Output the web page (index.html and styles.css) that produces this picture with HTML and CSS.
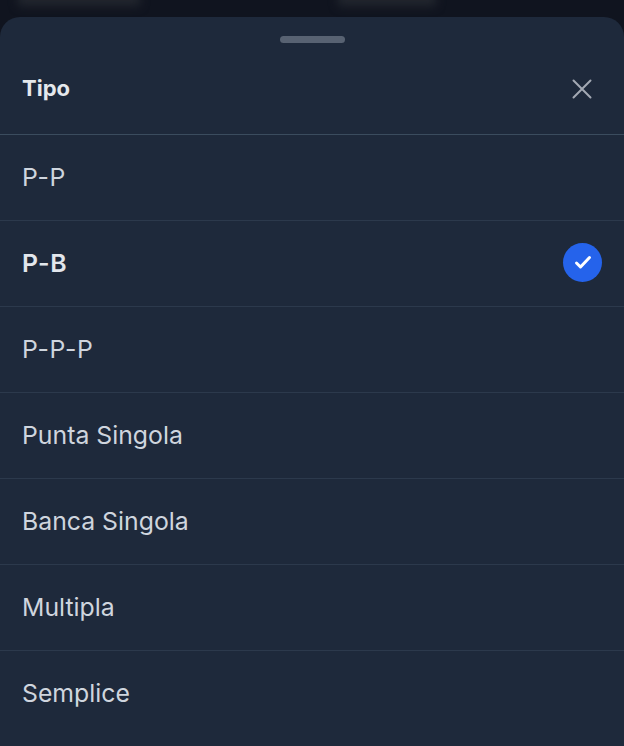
FILE: index.html
```html
<!DOCTYPE html>
<html>
<head>
    <title>Tipo</title>
    <link rel="stylesheet" href="styles.css">
</head>
<body>
    <div class="backdrop">
        <span class="blur blur-left"></span>
        <span class="blur blur-right"></span>
    </div>

    <div class="sheet">
        <div class="handle"></div>

        <div class="sheet-header">
            <span class="sheet-title">Tipo</span>
            <svg class="close" width="24" height="24" viewBox="0 0 24 24" fill="none" stroke="#a3a9b4" stroke-width="2" stroke-linecap="round">
                <path d="M3.5 3.5 L20.5 20.5 M20.5 3.5 L3.5 20.5"/>
            </svg>
        </div>

        <ul class="options">
            <li class="code">P-P</li>
            <li class="code selected">
                P-B
                <span class="check">
                    <svg width="18" height="18" viewBox="0 0 18 18" fill="none" stroke="#fff" stroke-width="3" stroke-linecap="round" stroke-linejoin="round">
                        <path d="M2.5 10 L6.5 14 L15.5 4.5"/>
                    </svg>
                </span>
            </li>
            <li class="code">P-P-P</li>
            <li>Punta Singola</li>
            <li>Banca Singola</li>
            <li>Multipla</li>
            <li>Semplice</li>
        </ul>
    </div>
</body>
</html>
```

FILE: styles.css
```css
html, body {
    height: 100%;
}

body {
    font-family: Inter, "Liberation Sans", sans-serif;
    background-color: #10141f;
    margin: 0;
    padding: 0;
    overflow: hidden;
    display: flex;
    flex-direction: column;
}

.backdrop {
    height: 17px;
    flex-shrink: 0;
    position: relative;
    overflow: hidden;
}

.blur {
    position: absolute;
    top: -10px;
    height: 16px;
    background-color: #22262e;
    filter: blur(5px);
}

.blur-left {
    left: 18px;
    width: 122px;
}

.blur-right {
    left: 338px;
    width: 98px;
}

.sheet {
    flex: 1;
    background-color: #1e293b;
    border-radius: 20px 20px 0 0;
}

.handle {
    width: 65px;
    height: 7px;
    margin: 19px auto 0;
    background-color: #586272;
    border-radius: 4px;
}

.sheet-header {
    height: 91px;
    padding: 0 30px 0 22px;
    display: flex;
    align-items: center;
    justify-content: space-between;
    border-bottom: 1px solid #3b4c5e;
}

.sheet-title {
    color: #e5e8ec;
    font-size: 22px;
    font-weight: 700;
    margin-bottom: 2px;
}

.options {
    list-style: none;
    margin: 0;
    padding: 0;
}

.options li {
    height: 83px;
    padding: 0 22px 2px;
    display: flex;
    align-items: center;
    justify-content: space-between;
    border-bottom: 1px solid #2c394c;
    color: #cfd5de;
    font-size: 24.8px;
}

.options li:last-child {
    border-bottom: none;
}

.options .code {
    letter-spacing: 0.7px;
}

.options .selected {
    color: #e2e6ec;
    font-weight: 600;
}

.check {
    width: 39px;
    height: 39px;
    margin-top: -1px;
    border-radius: 50%;
    background-color: #2563eb;
    display: flex;
    align-items: center;
    justify-content: center;
}
```
